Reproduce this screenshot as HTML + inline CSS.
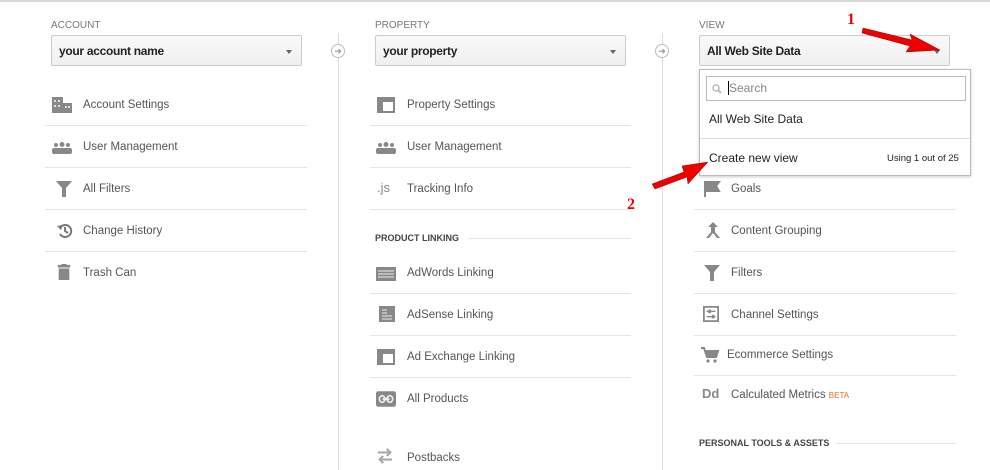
<!DOCTYPE html>
<html><head><style>
*{margin:0;padding:0;box-sizing:border-box}
body{width:990px;height:470px;background:#fff;font-family:"Liberation Sans",Arial,sans-serif;position:relative;overflow:hidden;color:#444}
.topline{position:absolute;left:0;top:0;width:990px;height:2px;background:#d8d8d8}
.lbl{position:absolute;font-size:10px;color:#777}
.sel{position:absolute;height:31px;border:1px solid #ccc;border-radius:2px;background:linear-gradient(#fafafa,#efefef);font-size:12px;letter-spacing:-0.3px;font-weight:bold;color:#222;padding:8px 7px}
.sel:after{content:"";position:absolute;right:9px;top:14px;border:3.5px solid transparent;border-top:4px solid #666}
.vline{position:absolute;top:33px;bottom:0;width:1px;background:#ddd}
.circ{position:absolute;width:14px;height:14px;border:1px solid #bbb;border-radius:50%;background:#fff;font-size:9px;color:#999;text-align:center;line-height:12px}
.item{position:absolute;font-size:11.5px;color:#555;height:20px;line-height:20px}
.sep{position:absolute;height:1px;background:#e5e5e5}
.ic{position:absolute;width:20px;height:16px}
.hdr{position:absolute;font-size:9px;font-weight:bold;color:#444}
.dd{position:absolute;left:699px;top:69px;width:272px;height:107px;border:1px solid #bbb;background:#fff;box-shadow:0 1px 3px rgba(0,0,0,.2)}
</style></head><body>
<div class="topline"></div>

<div class="lbl" style="left:51px;top:20px">ACCOUNT</div>
<div class="sel" style="left:51px;top:35px;width:251px">your account name</div>
<div class="lbl" style="left:375px;top:20px">PROPERTY</div>
<div class="sel" style="left:375px;top:35px;width:251px">your property</div>
<div class="lbl" style="left:699px;top:20px">VIEW</div>
<div class="sel" style="left:699px;top:35px;width:251px">All Web Site Data</div>

<div class="vline" style="left:338px"></div>
<div class="vline" style="left:662px"></div>
<div class="circ" style="left:331px;top:44px">➜</div>
<div class="circ" style="left:655px;top:44px">➜</div>

<svg class="ic" style="left:52px;top:97px" viewBox="0 0 20 16"><rect x="0" y="0" width="11" height="16" fill="#888"/><rect x="11" y="6" width="9" height="10" fill="#888"/><g fill="#ddd"><rect x="2" y="3" width="2" height="2"/><rect x="6" y="3" width="2" height="2"/><rect x="2" y="8" width="2" height="2"/><rect x="6" y="8" width="2" height="2"/><rect x="13" y="9" width="2" height="2"/><rect x="16" y="9" width="2" height="2"/></g></svg>
<div class="item" style="left:83px;top:95px">Account Settings</div>
<div class="sep" style="left:45px;top:125px;width:262px"></div>
<svg class="ic" style="left:52px;top:140px" viewBox="0 0 20 12"><g fill="#888"><circle cx="4" cy="3" r="2"/><circle cx="10" cy="2.5" r="2.5"/><circle cx="16" cy="3" r="2"/><rect x="0" y="6" width="20" height="6" rx="2"/></g></svg>
<div class="item" style="left:83px;top:137px">User Management</div>
<div class="sep" style="left:45px;top:167px;width:262px"></div>
<svg class="ic" style="left:54px;top:181px" viewBox="0 0 16 16"><path d="M0 0H16L10 7V16H6V7Z" fill="#888"/></svg>
<div class="item" style="left:83px;top:179px">All Filters</div>
<div class="sep" style="left:45px;top:209px;width:262px"></div>
<svg class="ic" style="left:55px;top:223px" viewBox="0 0 16 16"><path d="M3 5A6 6 0 1 1 3 11" stroke="#777" stroke-width="2" fill="none"/><path d="M0 3L4 7L6 2Z" fill="#777"/><path d="M8 4V8L11 10" stroke="#777" stroke-width="2" fill="none"/></svg>
<div class="item" style="left:83px;top:221px">Change History</div>
<div class="sep" style="left:45px;top:251px;width:262px"></div>
<svg class="ic" style="left:54px;top:264px" viewBox="0 0 16 18"><rect x="1" y="1" width="14" height="3" fill="#888"/><rect x="5" y="0" width="6" height="2" fill="#888"/><rect x="2" y="5" width="12" height="13" fill="#888"/></svg>
<div class="item" style="left:83px;top:263px">Trash Can</div>

<svg class="ic" style="left:376px;top:97px" viewBox="0 0 18 16"><rect x="1" y="1" width="16" height="14" fill="none" stroke="#888" stroke-width="2"/><rect x="1" y="1" width="16" height="4" fill="#888"/><rect x="1" y="5" width="5" height="10" fill="#888"/></svg>
<div class="item" style="left:407px;top:95px">Property Settings</div>
<div class="sep" style="left:370px;top:125px;width:261px"></div>
<svg class="ic" style="left:376px;top:140px" viewBox="0 0 20 12"><g fill="#888"><circle cx="4" cy="3" r="2"/><circle cx="10" cy="2.5" r="2.5"/><circle cx="16" cy="3" r="2"/><rect x="0" y="6" width="20" height="6" rx="2"/></g></svg>
<div class="item" style="left:407px;top:137px">User Management</div>
<div class="sep" style="left:370px;top:167px;width:261px"></div>
<div class="item" style="left:377px;top:178px;color:#888;font-size:13px">.js</div>
<div class="item" style="left:407px;top:179px">Tracking Info</div>
<div class="sep" style="left:370px;top:209px;width:261px"></div>
<div class="hdr" style="left:375px;top:233px">PRODUCT LINKING</div>
<div class="sep" style="left:468px;top:238px;width:163px"></div>
<svg class="ic" style="left:376px;top:266px" viewBox="0 0 20 14"><rect x="0" y="0" width="20" height="14" fill="#888"/><g stroke="#eee" stroke-width="1"><path d="M2 4H18M2 7H18M2 10H18"/></g></svg>
<div class="item" style="left:407px;top:263px">AdWords Linking</div>
<div class="sep" style="left:370px;top:293px;width:261px"></div>
<svg class="ic" style="left:377px;top:306px" viewBox="0 0 16 16"><rect x="0" y="0" width="16" height="16" fill="#888"/><g stroke="#eee"><path d="M3 4H8M3 7H8M3 10H13M3 13H13"/></g></svg>
<div class="item" style="left:407px;top:305px">AdSense Linking</div>
<div class="sep" style="left:370px;top:335px;width:261px"></div>
<svg class="ic" style="left:376px;top:349px" viewBox="0 0 18 16"><rect x="1" y="1" width="16" height="14" fill="none" stroke="#888" stroke-width="2"/><rect x="1" y="1" width="16" height="4" fill="#888"/><rect x="1" y="5" width="5" height="10" fill="#888"/></svg>
<div class="item" style="left:407px;top:347px">Ad Exchange Linking</div>
<div class="sep" style="left:370px;top:377px;width:261px"></div>
<svg class="ic" style="left:376px;top:391px" viewBox="0 0 18 14"><rect x="0" y="0" width="18" height="14" rx="2" fill="#888"/><path d="M6 7H12" stroke="#eee" stroke-width="2"/><rect x="3" y="4" width="5" height="6" rx="3" fill="none" stroke="#eee" stroke-width="1.5"/><rect x="10" y="4" width="5" height="6" rx="3" fill="none" stroke="#eee" stroke-width="1.5"/></svg>
<div class="item" style="left:407px;top:389px">All Products</div>
<svg class="ic" style="left:375px;top:448px" viewBox="0 0 20 18"><path d="M2 5H16M12 1L16 5L12 9M18 13H4M8 9L4 13L8 17" stroke="#aaa" stroke-width="2.5" fill="none"/></svg>
<div class="item" style="left:407px;top:448px">Postbacks</div>

<svg class="ic" style="left:702px;top:181px" viewBox="0 0 16 16"><path d="M1 0V16M1 1H15L12 5L15 10H1" fill="#888" stroke="#888" stroke-width="2"/></svg>
<div class="item" style="left:731px;top:179px">Goals</div>
<div class="sep" style="left:694px;top:209px;width:262px"></div>
<svg class="ic" style="left:703px;top:222px" viewBox="0 0 16 16"><path d="M8 0L3 5H6V10L1 16H4L8 11L12 16H15L10 10V5H13Z" fill="#888"/></svg>
<div class="item" style="left:731px;top:221px">Content Grouping</div>
<div class="sep" style="left:694px;top:251px;width:262px"></div>
<svg class="ic" style="left:702px;top:265px" viewBox="0 0 16 16"><path d="M0 0H16L10 7V16H6V7Z" fill="#888"/></svg>
<div class="item" style="left:731px;top:263px">Filters</div>
<div class="sep" style="left:694px;top:293px;width:262px"></div>
<svg class="ic" style="left:701px;top:306px" viewBox="0 0 18 18"><rect x="1" y="1" width="16" height="16" fill="none" stroke="#888" stroke-width="2"/><path d="M4 6H14M4 12H14" stroke="#888" stroke-width="1.5"/><rect x="6" y="4" width="3" height="4" fill="#888"/><rect x="10" y="10" width="3" height="4" fill="#888"/></svg>
<div class="item" style="left:731px;top:305px">Channel Settings</div>
<div class="sep" style="left:694px;top:335px;width:262px"></div>
<svg class="ic" style="left:700px;top:347px" viewBox="0 0 18 16"><path d="M0 1H3L6 10H15L17 4H5" fill="none" stroke="#888" stroke-width="2"/><rect x="5" y="4" width="11" height="5" fill="#888"/><circle cx="7" cy="14" r="1.6" fill="#888"/><circle cx="14" cy="14" r="1.6" fill="#888"/></svg>
<div class="item" style="left:727px;top:345px">Ecommerce Settings</div>
<div class="sep" style="left:694px;top:375px;width:262px"></div>
<div class="item" style="left:702px;top:384px;font-weight:bold;color:#888;font-size:13px">Dd</div>
<div class="item" style="left:731px;top:385px">Calculated Metrics <span style="color:#e8711a;font-size:8px">BETA</span></div>
<div class="hdr" style="left:699px;top:438px">PERSONAL TOOLS &amp; ASSETS</div>
<div class="sep" style="left:836px;top:443px;width:120px"></div>

<div class="dd">
  <div style="position:absolute;left:6px;top:6px;width:260px;height:25px;border:1px solid #bbb"></div>
  <svg style="position:absolute;left:12px;top:14px" width="10" height="10" viewBox="0 0 10 10"><circle cx="4" cy="4" r="3" fill="none" stroke="#bbb" stroke-width="1.5"/><path d="M6 6L9 9" stroke="#bbb" stroke-width="2"/></svg>
  <div style="position:absolute;left:28px;top:11px;width:1px;height:14px;background:#000"></div>
  <div style="position:absolute;left:29px;top:11px;font-size:12px;color:#888">Search</div>
  <div style="position:absolute;left:9px;top:42px;font-size:12px;color:#222">All Web Site Data</div>
  <div style="position:absolute;left:0;top:68px;width:270px;height:1px;background:#ddd"></div>
  <div style="position:absolute;left:9px;top:81px;font-size:12px;color:#222">Create new view</div>
  <div style="position:absolute;left:187px;top:83px;font-size:9.5px;color:#222">Using 1 out of 25</div>
</div>

<div style="position:absolute;left:847px;top:11px;font-family:'Liberation Serif',serif;font-weight:bold;font-size:16px;color:#e00">1</div>
<div style="position:absolute;left:627px;top:196px;font-family:'Liberation Serif',serif;font-weight:bold;font-size:16px;color:#e00">2</div>
<svg style="position:absolute;left:860px;top:22px" width="85" height="32" viewBox="0 0 85 32"><path d="M3 6L52 18L50 12L80 28L46 30L50 24L2 11Z" fill="#e00" stroke="#900" stroke-width="0.5"/></svg>
<svg style="position:absolute;left:648px;top:158px" width="62" height="34" viewBox="0 0 62 34"><path d="M4 26L36 14L34 8L60 4L40 26L39 19L7 31Z" fill="#e00" stroke="#900" stroke-width="0.5"/></svg>
</body></html>
